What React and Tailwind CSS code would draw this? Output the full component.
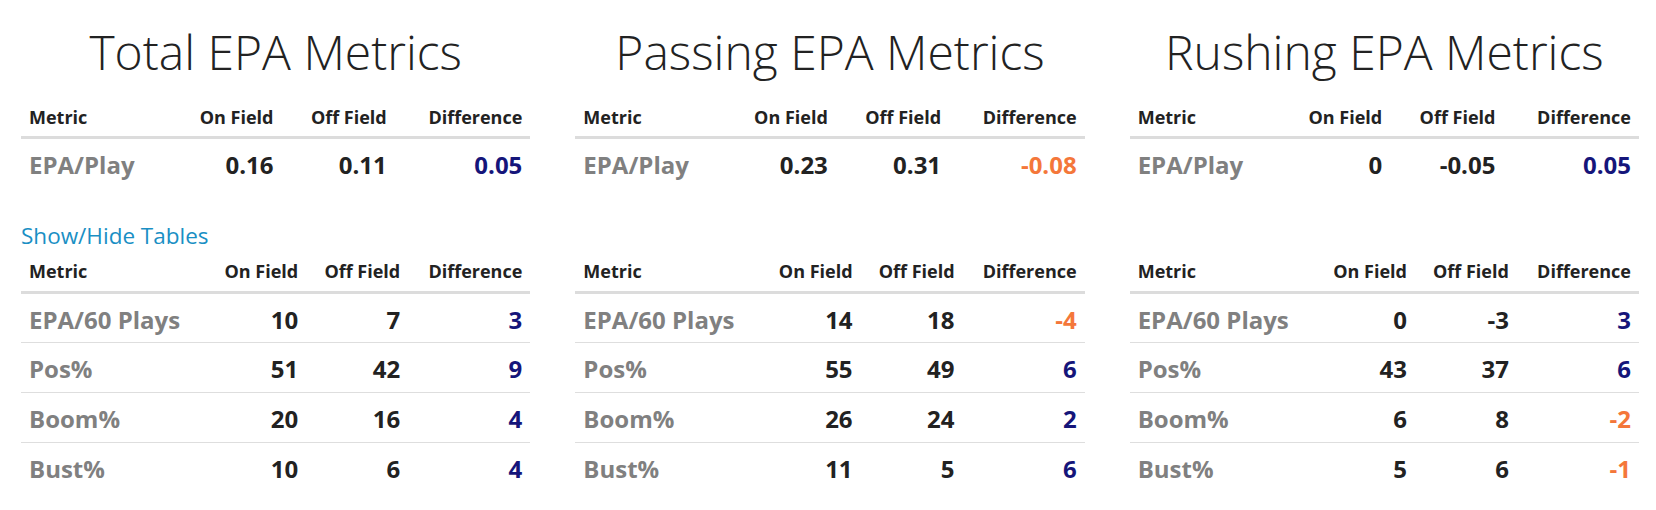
import React from "react";

const sections = [
  {
    title: "Total EPA Metrics",
    play: ["0.16", "0.11", "0.05"],
    rows: [
      ["EPA/60 Plays", "10", "7", "3"],
      ["Pos%", "51", "42", "9"],
      ["Boom%", "20", "16", "4"],
      ["Bust%", "10", "6", "4"],
    ],
    showLink: true,
  },
  {
    title: "Passing EPA Metrics",
    play: ["0.23", "0.31", "-0.08"],
    rows: [
      ["EPA/60 Plays", "14", "18", "-4"],
      ["Pos%", "55", "49", "6"],
      ["Boom%", "26", "24", "2"],
      ["Bust%", "11", "5", "6"],
    ],
  },
  {
    title: "Rushing EPA Metrics",
    play: ["0", "-0.05", "0.05"],
    rows: [
      ["EPA/60 Plays", "0", "-3", "3"],
      ["Pos%", "43", "37", "6"],
      ["Boom%", "6", "8", "-2"],
      ["Bust%", "5", "6", "-1"],
    ],
  },
];

// negative differences go orange, the rest navy
const diffColor = (v) =>
  v.startsWith("-") ? "text-[#f4773a]" : "text-[#15157a]";

function MetricTable({ rows }) {
  return (
    <table className="w-full border-collapse">
      <thead>
        <tr className="border-b-[3px] border-[#dcdcdc] text-[18px] font-bold text-[#222]">
          <th className="px-2 pt-[9px] pb-2 text-left leading-[1.2]">Metric</th>
          <th className="px-2 pt-[9px] pb-2 text-right leading-[1.2]">On Field</th>
          <th className="px-2 pt-[9px] pb-2 text-right leading-[1.2]">Off Field</th>
          <th className="px-2 pt-[9px] pb-2 text-right leading-[1.2]">Difference</th>
        </tr>
      </thead>
      <tbody>
        {rows.map((r, i) => (
          <tr
            key={r[0]}
            className={`text-[24px] font-bold leading-[1.2] ${
              i < rows.length - 1 ? "border-b border-[#dedede]" : ""
            }`}
          >
            <td className="px-2 pt-3 pb-2 text-left text-[#808080]">{r[0]}</td>
            <td className="px-2 pt-3 pb-2 text-right text-[#222]">{r[1]}</td>
            <td className="px-2 pt-3 pb-2 text-right text-[#222]">{r[2]}</td>
            <td className={`px-2 pt-3 pb-2 text-right ${diffColor(r[3])}`}>
              {r[3]}
            </td>
          </tr>
        ))}
      </tbody>
    </table>
  );
}

function Section({ s }) {
  return (
    <div className="flex-1 min-w-0">
      <h2 className="text-center text-[48px] font-light leading-[1.2] text-[#222] pt-[23px] pb-[17px]">
        {s.title}
      </h2>
      <MetricTable rows={[["EPA/Play", ...s.play]]} />
      <div className="h-[33px] mt-[31px]">
        {s.showLink && (
          <a className="text-[22.5px] leading-[1.5] text-[#1a8fc4] cursor-pointer">
            Show/Hide Tables
          </a>
        )}
      </div>
      <MetricTable rows={s.rows} />
    </div>
  );
}

export default function App() {
  return (
    <div
      className="bg-white w-[1656px] h-[510px] pl-[21px] pr-[17px] flex gap-[45px]"
      style={{ fontFamily: '"Open Sans", sans-serif' }}
    >
      {sections.map((s) => (
        <Section key={s.title} s={s} />
      ))}
    </div>
  );
}
